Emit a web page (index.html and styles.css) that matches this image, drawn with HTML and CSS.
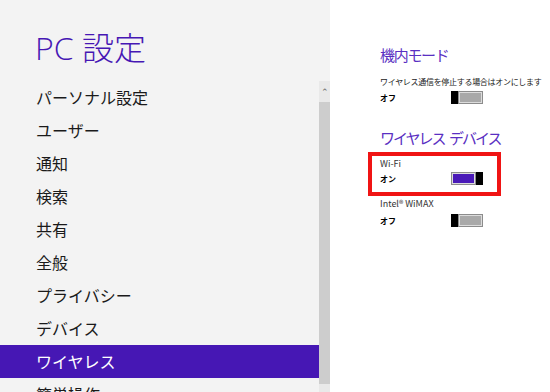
FILE: index.html
```html
<!DOCTYPE html>
<html>

<head>
    <title>PC 設定</title>
    <link rel="stylesheet" href="styles.css">
</head>

<body>
    <div class="screen">
        <div class="side">
            <h1 class="title">PC 設定</h1>
            <div class="nav-wrap">
                <ul class="nav">
                    <li>パーソナル設定</li>
                    <li>ユーザー</li>
                    <li>通知</li>
                    <li>検索</li>
                    <li>共有</li>
                    <li>全般</li>
                    <li>プライバシー</li>
                    <li>デバイス</li>
                    <li class="active">ワイヤレス</li>
                    <li>簡単操作</li>
                </ul>
                <div class="scrollbar">
                    <div class="arrow">&#8963;</div>
                    <div class="thumb"></div>
                    <div class="track-end"></div>
                </div>
            </div>
        </div>

        <div class="main">
            <h2 class="heading">機内モード</h2>
            <p class="desc">ワイヤレス通信を停止する場合はオンにします</p>
            <div class="row">
                <span class="state">オフ</span>
                <div class="toggle"><div class="knob"></div><div class="bar"></div></div>
            </div>

            <h2 class="heading second">ワイヤレス デバイス</h2>
            <div class="device selected">
                <p class="name">Wi-Fi</p>
                <div class="row">
                    <span class="state">オン</span>
                    <div class="toggle on"><div class="bar"></div><div class="knob"></div></div>
                </div>
            </div>
            <div class="device">
                <p class="name">Intel® WiMAX</p>
                <div class="row">
                    <span class="state">オフ</span>
                    <div class="toggle"><div class="knob"></div><div class="bar"></div></div>
                </div>
            </div>
        </div>
    </div>
</body>

</html>
```

FILE: styles.css
```css
body {
    margin: 0;
    overflow: hidden;
    background-color: #fff;
    font-family: "Noto Sans CJK JP", "Noto Sans", sans-serif;
    color: #1a1a1a;
}

.screen {
    display: flex;
    height: 392px;
    overflow: hidden;
}

.side {
    width: 330px;
    background-color: #f3f3f3;
    display: flex;
    flex-direction: column;
}

.title {
    margin: 28px 0 13px 35px;
    font-family: "Open Sans", "Noto Sans CJK JP", sans-serif;
    font-weight: 300;
    font-size: 32px;
    line-height: 40px;
    color: #4617b4;
}

.nav-wrap {
    display: flex;
    flex: 1;
    overflow: hidden;
}

.nav {
    list-style: none;
    margin: 0;
    padding: 0;
    width: 319px;
}

.nav li {
    height: 33px;
    line-height: 32px;
    padding-left: 36px;
    font-size: 16px;
    color: #1a1a1a;
}

.nav li.active {
    background-color: #4617b4;
    color: #fff;
}

.scrollbar {
    width: 11px;
    display: flex;
    flex-direction: column;
}

.scrollbar .arrow {
    height: 21px;
    background-color: #e9e9e9;
    color: #666;
    font-size: 9px;
    line-height: 21px;
    text-align: center;
}

.scrollbar .thumb {
    height: 282px;
    background-color: #cdcdcd;
}

.scrollbar .track-end {
    flex: 1;
    background-color: #e9e9e9;
}

.main {
    flex: 1;
    padding: 45px 0 0 50px;
}

.heading {
    margin: 0;
    font-size: 15px;
    font-weight: normal;
    line-height: 20px;
    letter-spacing: -1.3px;
    color: #5a2fc2;
}

.heading.second {
    margin-top: 24px;
    letter-spacing: -2px;
    word-spacing: 3px;
}

.desc {
    margin: 11px 0 3px 0;
    font-size: 8px;
    line-height: 12px;
    letter-spacing: -0.3px;
    color: #222;
}

.row {
    display: flex;
    align-items: center;
    height: 13px;
}

.state {
    width: 71px;
    font-size: 8px;
    font-weight: bold;
    color: #000;
}

.toggle {
    display: flex;
    width: 32px;
    height: 13px;
}

.toggle .knob {
    width: 7px;
    background-color: #000;
}

.toggle .bar {
    flex: 1;
    border: 1px solid #8c8c8c;
    background-color: #a9a9a9;
    box-shadow: inset 0 0 0 1px #dcdcdc;
}

.toggle.on .bar {
    background-color: #4a1ab8;
}

.device {
    margin-left: -12px;
    padding: 2px 0 0 12px;
    width: 117px;
}

.device.selected {
    margin-top: 4px;
    padding: 2px 0 7px 8px;
    border: 4px solid #f01414;
}

.device .name {
    margin: 0;
    font-size: 9px;
    line-height: 12px;
    color: #333;
}

.device .name + .row {
    margin-top: 4px;
}

.device.selected .name + .row {
    margin-top: 2px;
}
```
